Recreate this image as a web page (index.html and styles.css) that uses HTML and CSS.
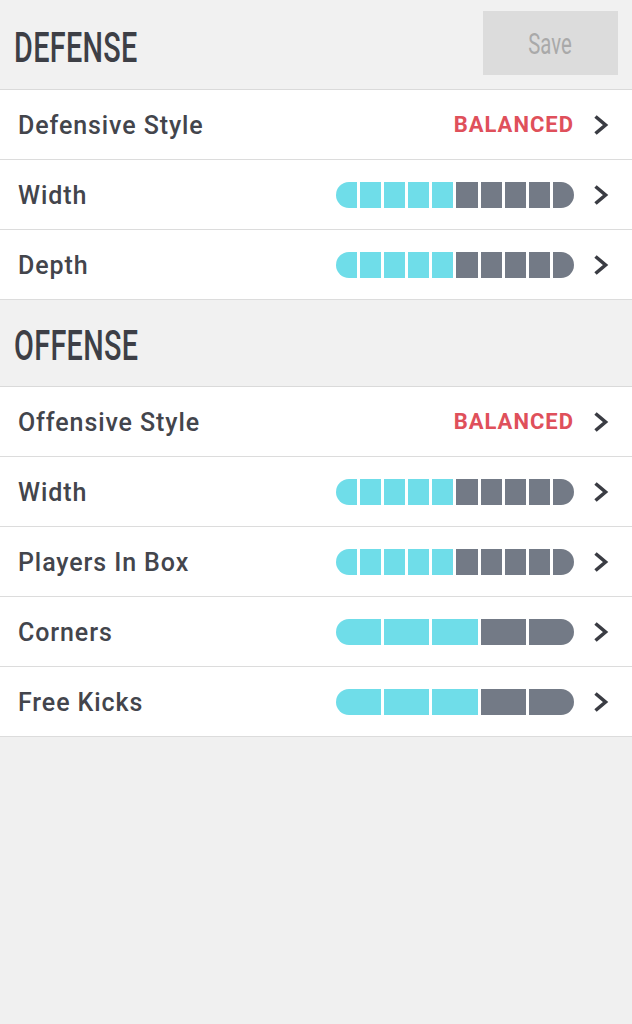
FILE: index.html
```html
<!DOCTYPE html>
<html>
<head>
<meta charset="utf-8">
<link rel="stylesheet" href="styles.css">
</head>
<body>
<div class="page">
  <header class="section-head head-first">
    <h1 class="title"><span>DEFENSE</span></h1>
    <button class="save"><span>Save</span></button>
  </header>
  <div class="row">
    <span class="label">Defensive Style</span>
    <div class="right"><span class="value">BALANCED</span><svg class="chev" viewBox="0 0 16 24"><path d="M2.5 3.5 L12.5 12 L2.5 20.5"/></svg></div>
  </div>
  <div class="row">
    <span class="label">Width</span>
    <div class="right">
      <div class="bar"><i class="on"></i><i class="on"></i><i class="on"></i><i class="on"></i><i class="on"></i><i></i><i></i><i></i><i></i><i></i></div>
      <svg class="chev" viewBox="0 0 16 24"><path d="M2.5 3.5 L12.5 12 L2.5 20.5"/></svg>
    </div>
  </div>
  <div class="row">
    <span class="label">Depth</span>
    <div class="right">
      <div class="bar"><i class="on"></i><i class="on"></i><i class="on"></i><i class="on"></i><i class="on"></i><i></i><i></i><i></i><i></i><i></i></div>
      <svg class="chev" viewBox="0 0 16 24"><path d="M2.5 3.5 L12.5 12 L2.5 20.5"/></svg>
    </div>
  </div>
  <header class="section-head head-second">
    <h1 class="title"><span>OFFENSE</span></h1>
  </header>
  <div class="row">
    <span class="label">Offensive Style</span>
    <div class="right"><span class="value">BALANCED</span><svg class="chev" viewBox="0 0 16 24"><path d="M2.5 3.5 L12.5 12 L2.5 20.5"/></svg></div>
  </div>
  <div class="row">
    <span class="label">Width</span>
    <div class="right">
      <div class="bar"><i class="on"></i><i class="on"></i><i class="on"></i><i class="on"></i><i class="on"></i><i></i><i></i><i></i><i></i><i></i></div>
      <svg class="chev" viewBox="0 0 16 24"><path d="M2.5 3.5 L12.5 12 L2.5 20.5"/></svg>
    </div>
  </div>
  <div class="row">
    <span class="label">Players In Box</span>
    <div class="right">
      <div class="bar"><i class="on"></i><i class="on"></i><i class="on"></i><i class="on"></i><i class="on"></i><i></i><i></i><i></i><i></i><i></i></div>
      <svg class="chev" viewBox="0 0 16 24"><path d="M2.5 3.5 L12.5 12 L2.5 20.5"/></svg>
    </div>
  </div>
  <div class="row">
    <span class="label">Corners</span>
    <div class="right">
      <div class="bar"><i class="on"></i><i class="on"></i><i class="on"></i><i></i><i></i></div>
      <svg class="chev" viewBox="0 0 16 24"><path d="M2.5 3.5 L12.5 12 L2.5 20.5"/></svg>
    </div>
  </div>
  <div class="row">
    <span class="label">Free Kicks</span>
    <div class="right">
      <div class="bar"><i class="on"></i><i class="on"></i><i class="on"></i><i></i><i></i></div>
      <svg class="chev" viewBox="0 0 16 24"><path d="M2.5 3.5 L12.5 12 L2.5 20.5"/></svg>
    </div>
  </div>
</div>
</body>
</html>
```

FILE: styles.css
```css
html, body {
  margin: 0;
  padding: 0;
  background: #f0f0f0;
}
body {
  font-family: Roboto, "Liberation Sans", sans-serif;
  width: 632px;
  height: 1024px;
  overflow: hidden;
}
.page {
  display: flex;
  flex-direction: column;
}
.section-head {
  display: flex;
  align-items: center;
  justify-content: space-between;
  background: #f1f1f1;
  border-bottom: 1px solid #dadada;
  box-sizing: border-box;
  padding: 0 14px 0 14px;
}
.head-first {
  height: 90px;
}
.head-second {
  height: 87px;
  padding-top: 5px;
}
.head-first .title {
  padding-top: 5px;
}
.title {
  margin: 0;
  font-size: 43px;
  font-weight: 500;
  color: #3d3f46;
  line-height: 1;
  width: 130px;
}
.title span {
  display: inline-block;
  transform: scaleX(0.67);
  transform-origin: left center;
  white-space: nowrap;
  letter-spacing: 0.5px;
}
.save {
  width: 135px;
  height: 64px;
  margin-top: -4px;
  border: none;
  background: #dcdcdc;
  color: #a9a9a9;
  font-family: Roboto, sans-serif;
  font-size: 29px;
  font-weight: 400;
  padding: 0;
  display: flex;
  align-items: center;
  justify-content: center;
}
.save span {
  display: inline-block;
  transform: scaleX(0.7);
  padding-top: 3px;
}
.row {
  height: 70px;
  box-sizing: border-box;
  background: #fff;
  border-bottom: 1px solid #dcdcdc;
  display: flex;
  align-items: center;
  justify-content: space-between;
  padding: 0 23px 0 18px;
}
.label {
  font-size: 25px;
  font-weight: 500;
  color: #43454c;
  letter-spacing: 0.9px;
  padding-top: 2px;
}
.right {
  display: flex;
  align-items: center;
  gap: 19px;
}
.value {
  font-size: 22px;
  font-weight: 700;
  color: #df505b;
  letter-spacing: 1px;
}
.chev {
  width: 16px;
  height: 24px;
  fill: none;
  stroke: #3a3c43;
  stroke-width: 3.6;
  stroke-linecap: butt;
  stroke-linejoin: miter;
}
.bar {
  display: flex;
  gap: 3px;
  width: 238px;
  height: 26px;
  border-radius: 13px;
  overflow: hidden;
}
.bar i {
  flex: 1;
  background: #737a86;
}
.bar i.on {
  background: #6fdde9;
}
```
